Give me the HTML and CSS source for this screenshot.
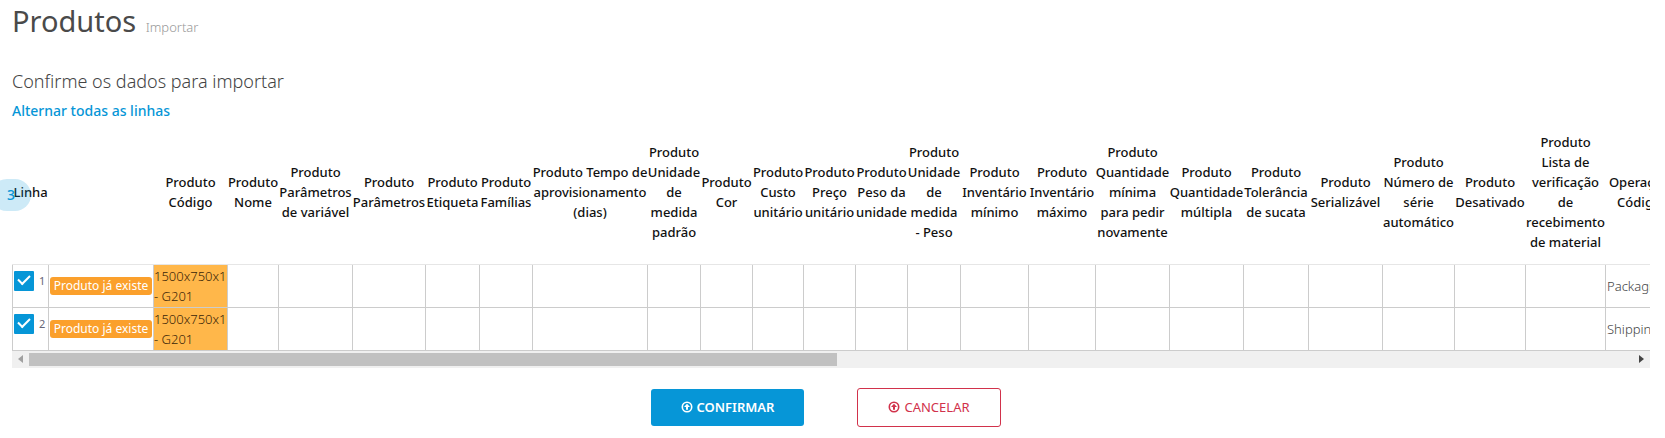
FILE: index.html
```html
<!DOCTYPE html>
<html lang="pt">
<head>
<meta charset="utf-8">
<title>Produtos - Importar</title>
<link rel="stylesheet" href="styles.css">
</head>
<body>
<main class="page">
  <h1 class="title">Produtos <small class="subtitle">Importar</small></h1>
  <h2 class="lead">Confirme os dados para importar</h2>
  <a class="toggle" href="#">Alternar todas as linhas</a>
  <div class="grid">
    <span class="step">3</span>
    <div class="viewport">
      <table class="table">
        <colgroup>
          <col class="w36"><col class="w105"><col class="w74"><col class="w51"><col class="w74"><col class="w73"><col class="w54"><col class="w53"><col class="w115"><col class="w53"><col class="w52"><col class="w51"><col class="w52"><col class="w52"><col class="w53"><col class="w68"><col class="w67"><col class="w74"><col class="w74"><col class="w65"><col class="w74"><col class="w72"><col class="w71"><col class="w80"><col class="w67">
        </colgroup>
        <thead>
          <tr>
            <th class="line">Linha</th>
            <th></th>
            <th>Produto<br>Código</th>
            <th>Produto<br>Nome</th>
            <th>Produto<br>Parâmetros<br>de variável</th>
            <th>Produto<br>Parâmetros</th>
            <th>Produto<br>Etiqueta</th>
            <th>Produto<br>Famílias</th>
            <th>Produto Tempo de<br>aprovisionamento<br>(dias)</th>
            <th>Produto<br>Unidade<br>de<br>medida<br>padrão</th>
            <th>Produto<br>Cor</th>
            <th>Produto<br>Custo<br>unitário</th>
            <th>Produto<br>Preço<br>unitário</th>
            <th>Produto<br>Peso da<br>unidade</th>
            <th>Produto<br>Unidade<br>de<br>medida<br>- Peso</th>
            <th>Produto<br>Inventário<br>mínimo</th>
            <th>Produto<br>Inventário<br>máximo</th>
            <th>Produto<br>Quantidade<br>mínima<br>para pedir<br>novamente</th>
            <th>Produto<br>Quantidade<br>múltipla</th>
            <th>Produto<br>Tolerância<br>de sucata</th>
            <th>Produto<br>Serializável</th>
            <th>Produto<br>Número de<br>série<br>automático</th>
            <th>Produto<br>Desativado</th>
            <th>Produto<br>Lista de<br>verificação<br>de<br>recebimento<br>de material</th>
            <th>Operação<br>Código</th>
          </tr>
        </thead>
        <tbody>
          <tr>
            <td><label class="pick"><input class="check" type="checkbox" checked><span>1</span></label></td>
            <td><span class="tag">Produto já existe</span></td>
            <td class="warn">1500x750x1<br>- G201</td>
            <td></td><td></td><td></td><td></td><td></td><td></td><td></td><td></td><td></td><td></td><td></td><td></td><td></td><td></td><td></td><td></td><td></td><td></td><td></td><td></td><td></td>
            <td>Packaging</td>
          </tr>
          <tr>
            <td><label class="pick"><input class="check" type="checkbox" checked><span>2</span></label></td>
            <td><span class="tag">Produto já existe</span></td>
            <td class="warn">1500x750x1<br>- G201</td>
            <td></td><td></td><td></td><td></td><td></td><td></td><td></td><td></td><td></td><td></td><td></td><td></td><td></td><td></td><td></td><td></td><td></td><td></td><td></td><td></td><td></td>
            <td>Shipping</td>
          </tr>
        </tbody>
      </table>
    </div>
    <div class="scrollbar">
      <button class="arrow arrow-left" type="button" aria-label="Rolar para a esquerda"><svg width="5" height="8" viewBox="0 0 5 8"><path d="M5 0v8L0 4z" fill="currentColor"/></svg></button>
      <div class="track"><div class="thumb"></div></div>
      <button class="arrow" type="button" aria-label="Rolar para a direita"><svg width="5" height="8" viewBox="0 0 5 8"><path d="M0 0v8l5-4z" fill="currentColor"/></svg></button>
    </div>
  </div>
  <div class="actions">
    <button class="btn btn-primary" type="button"><svg class="icon" viewBox="0 0 12 12"><circle cx="6" cy="6" r="4.7" fill="none" stroke="currentColor" stroke-width="1.6"/><path d="M6 2.7 9 5.9H7V8.8H5V5.9H3z" fill="currentColor"/></svg>CONFIRMAR</button>
    <button class="btn btn-cancel" type="button"><svg class="icon" viewBox="0 0 12 12"><circle cx="6" cy="6" r="4.7" fill="none" stroke="currentColor" stroke-width="1.6"/><path d="M6 2.7 9 5.9H7V8.8H5V5.9H3z" fill="currentColor"/></svg>CANCELAR</button>
  </div>
</main>
</body>
</html>
```
FILE: styles.css
```css
* { box-sizing: border-box; }

body {
  margin: 0;
  background: #fff;
  color: #4a4a4a;
  font-family: "Noto Sans", "Open Sans", sans-serif;
  font-size: 13px;
  line-height: 20px;
}

.page { padding: 0 15px 0 12px; }

.title {
  margin: 0;
  font-size: 29px;
  font-weight: 400;
  line-height: 42px;
  color: #4a4a4a;
}

.subtitle { margin-left: 2px; font-size: 13px; font-weight: 300; color: #999; }

.lead {
  margin: 21px 0 7px;
  font-size: 18px;
  font-weight: 300;
  line-height: 25px;
  color: #444;
}

.toggle {
  display: block;
  width: fit-content;
  font-size: 14px;
  font-weight: 500;
  color: #0696d7;
  text-decoration: none;
}

.grid { position: relative; }

.step {
  position: absolute;
  top: 58px;
  left: -21px;
  width: 40px;
  height: 32px;
  padding-left: 16px;
  border-radius: 16px;
  background: rgba(6, 150, 215, 0.2);
  color: #0696d7;
  font-size: 14px;
  font-weight: 500;
  line-height: 32px;
}

.viewport { overflow: hidden; }

.table {
  width: 0;
  table-layout: fixed;
  border-collapse: collapse;
}

.table th {
  height: 143px;
  padding: 0;
  border-bottom: 1px solid #e6e6e6;
  color: #111;
  font-weight: 500;
  text-align: center;
  white-space: nowrap;
}

.table th.line { padding-left: 1px; text-align: left; }

.table td {
  height: 43px;
  padding: 0 1px;
  border: 1px solid #ccc;
  border-top-color: #e6e6e6;
  color: #444;
  font-weight: 300;
  white-space: nowrap;
}

.table tr + tr td { border-top-color: #ccc; }
.table td.warn { padding: 0; background: #ffb74a; color: #3a2508; }

.w36 { width: 36px; }
.w51 { width: 51px; }
.w52 { width: 52px; }
.w53 { width: 53px; }
.w54 { width: 54px; }
.w65 { width: 65px; }
.w67 { width: 67px; }
.w68 { width: 68px; }
.w71 { width: 71px; }
.w72 { width: 72px; }
.w73 { width: 73px; }
.w74 { width: 74px; }
.w80 { width: 80px; }
.w105 { width: 105px; }
.w115 { width: 115px; }

.pick {
  display: flex;
  align-items: center;
  gap: 5px;
  padding-bottom: 10px;
  font-size: 11px;
  font-weight: 400;
  color: #667;
}

.check {
  appearance: none;
  width: 20px;
  height: 20px;
  margin: 0;
  flex: none;
  border-radius: 1px;
  background: #0696d7;
  display: grid;
  place-items: center;
}

.check::before {
  content: "";
  width: 10px;
  height: 5px;
  border: solid #fff;
  border-width: 0 0 2px 2px;
  transform: translateY(-2px) rotate(-45deg);
}

.tag {
  display: block;
  border-radius: 3px;
  background: #fba02c;
  color: #fff;
  font-size: 12px;
  font-weight: 400;
  line-height: 18px;
  text-align: center;
}

.scrollbar {
  display: flex;
  height: 17px;
  background: #f0f0f0;
}

.arrow {
  display: grid;
  place-items: center;
  width: 17px;
  height: 17px;
  padding: 0;
  border: 0;
  background: none;
  color: #444;
}

.arrow-left { color: #a0a0a0; }
.track { flex: 1; padding: 2px 0; }
.thumb { width: 50.4%; height: 13px; background: #c1c1c1; }

.actions {
  display: flex;
  justify-content: center;
  align-items: center;
  gap: 53px;
  padding: 20px 10px 8px 0;
}

.btn {
  display: flex;
  align-items: center;
  justify-content: center;
  gap: 4px;
  border-radius: 3px;
  font: inherit;
}

.btn-primary {
  width: 153px;
  height: 37px;
  border: 0;
  background: #0696d7;
  color: #fff;
  font-weight: 600;
}

.btn-cancel {
  width: 144px;
  height: 39px;
  border: 1px solid #d1324b;
  background: #fff;
  color: #d1324b;
}

.icon { width: 12px; height: 12px; }
```
